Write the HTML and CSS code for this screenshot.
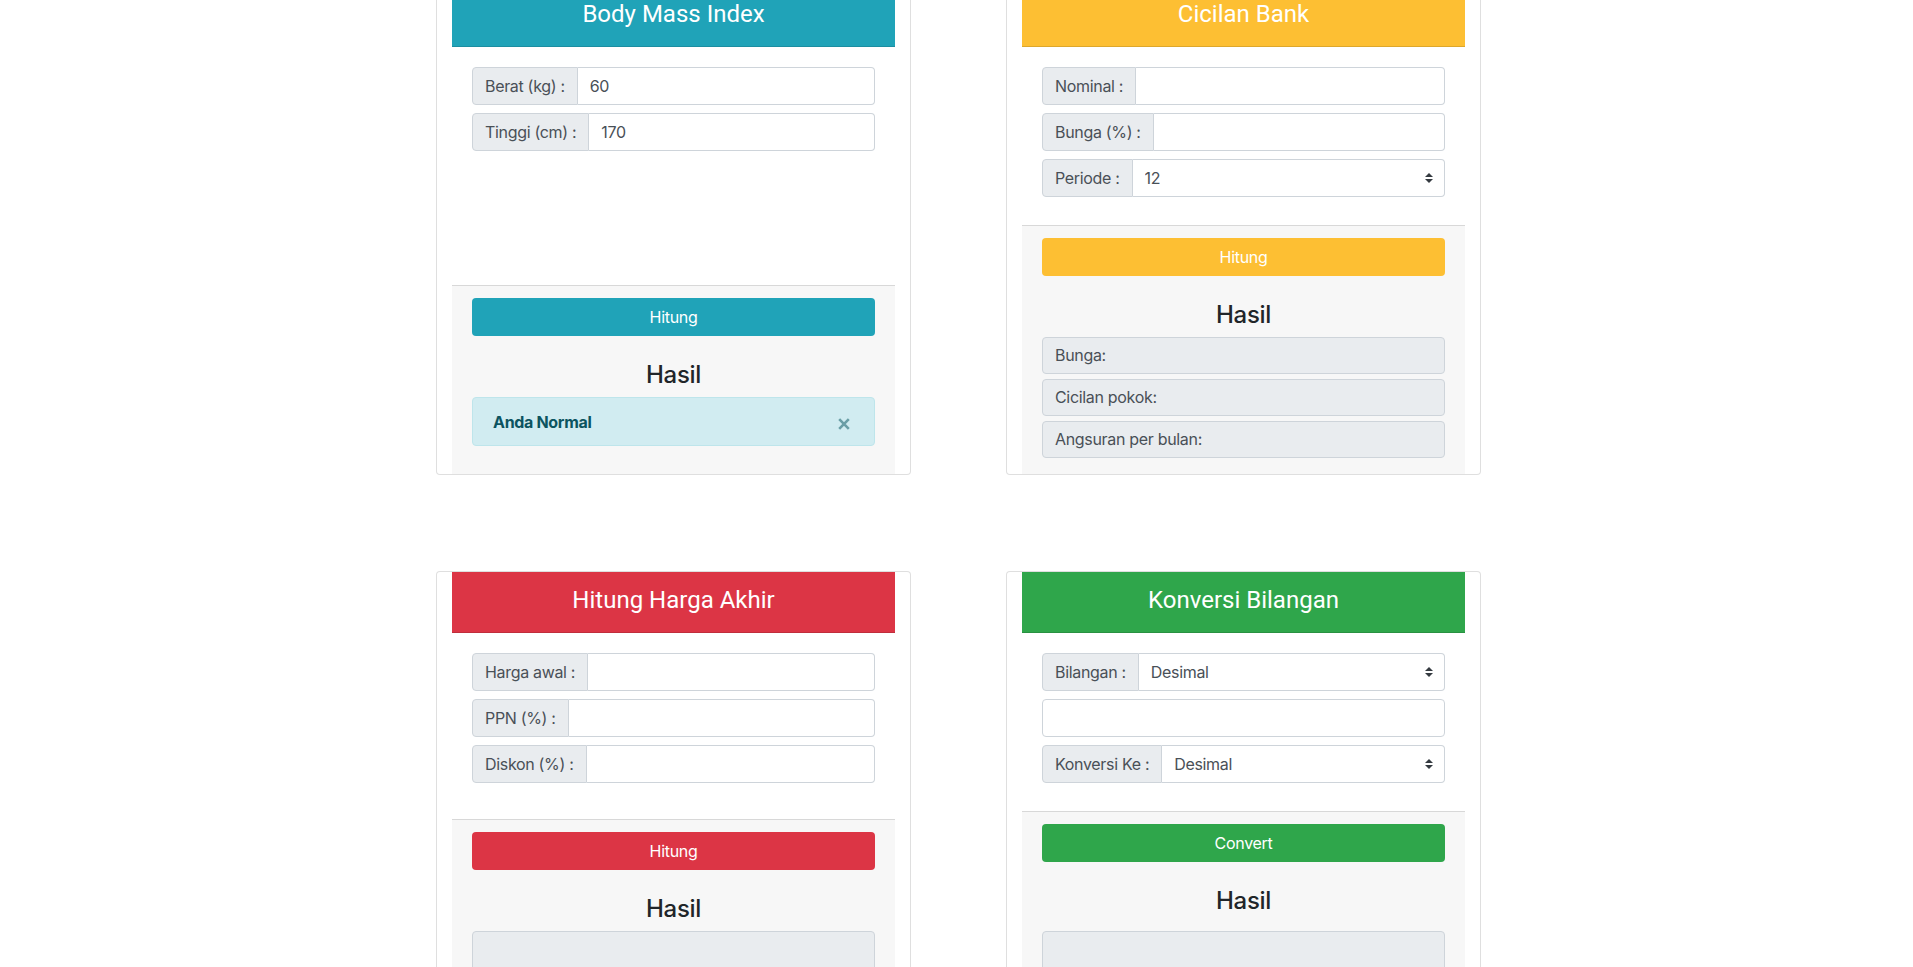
FILE: index.html
```html
<!DOCTYPE html>
<html lang="id">
<head>
<meta charset="utf-8">
<title>Kalkulator</title>
<link rel="stylesheet" href="styles.css">
</head>
<body>
<div class="page">
  <div class="grid">
    <!-- BMI -->
    <div class="card">
      <div class="card-header info"><h3 class="card-title">Body Mass Index</h3></div>
      <div class="card-body">
        <div class="input-group"><span class="addon">Berat (kg) :</span><input class="control" type="text" value="60"></div>
        <div class="input-group"><span class="addon">Tinggi (cm) :</span><input class="control" type="text" value="170"></div>
      </div>
      <div class="card-footer">
        <button class="btn info">Hitung</button>
        <h4 class="hasil">Hasil</h4>
        <div class="alert">
          <strong>Anda Normal</strong>
          <span class="close"><svg width="12" height="12" viewBox="0 0 12 12"><path d="M1.2 1.2L10.8 10.8M10.8 1.2L1.2 10.8" stroke="currentColor" stroke-width="2.6" fill="none"/></svg></span>
        </div>
      </div>
    </div>

    <!-- Cicilan -->
    <div class="card">
      <div class="card-header warning"><h3 class="card-title">Cicilan Bank</h3></div>
      <div class="card-body">
        <div class="input-group"><span class="addon">Nominal :</span><input class="control" type="text"></div>
        <div class="input-group"><span class="addon">Bunga (%) :</span><input class="control" type="text"></div>
        <div class="input-group"><span class="addon">Periode :</span>
          <div class="select-wrap"><select class="control select"><option>12</option></select><svg class="caret" width="8" height="10" viewBox="0 0 4 5"><path d="M2 0L0 2h4zm0 5L0 3h4z" fill="#343a40"/></svg></div>
        </div>
      </div>
      <div class="card-footer">
        <button class="btn warning">Hitung</button>
        <h4 class="hasil">Hasil</h4>
        <div class="result">Bunga:</div>
        <div class="result">Cicilan pokok:</div>
        <div class="result last">Angsuran per bulan:</div>
      </div>
    </div>

    <!-- Harga Akhir -->
    <div class="card">
      <div class="card-header danger"><h3 class="card-title">Hitung Harga Akhir</h3></div>
      <div class="card-body">
        <div class="input-group"><span class="addon">Harga awal :</span><input class="control" type="text"></div>
        <div class="input-group"><span class="addon">PPN (%) :</span><input class="control" type="text"></div>
        <div class="input-group"><span class="addon">Diskon (%) :</span><input class="control" type="text"></div>
      </div>
      <div class="card-footer">
        <button class="btn danger">Hitung</button>
        <h4 class="hasil">Hasil</h4>
        <div class="result tall"></div>
      </div>
    </div>

    <!-- Konversi -->
    <div class="card">
      <div class="card-header success"><h3 class="card-title">Konversi Bilangan</h3></div>
      <div class="card-body">
        <div class="input-group"><span class="addon">Bilangan :</span>
          <div class="select-wrap"><select class="control select"><option>Desimal</option></select><svg class="caret" width="8" height="10" viewBox="0 0 4 5"><path d="M2 0L0 2h4zm0 5L0 3h4z" fill="#343a40"/></svg></div>
        </div>
        <div class="input-group"><input class="control full" type="text"></div>
        <div class="input-group"><span class="addon">Konversi Ke :</span>
          <div class="select-wrap"><select class="control select"><option>Desimal</option></select><svg class="caret" width="8" height="10" viewBox="0 0 4 5"><path d="M2 0L0 2h4zm0 5L0 3h4z" fill="#343a40"/></svg></div>
        </div>
      </div>
      <div class="card-footer">
        <button class="btn success">Convert</button>
        <h4 class="hasil wide">Hasil</h4>
        <div class="result tall"></div>
      </div>
    </div>
  </div>
</div>
</body>
</html>
```

FILE: styles.css
```css
* { box-sizing: border-box; }

body {
  margin: 0;
  font-family: Inter, "Noto Sans", sans-serif;
  font-size: 16px;
  line-height: 1.5;
  color: #212529;
  background: #fff;
  letter-spacing: -0.02em;
}

.page {
  display: flex;
  justify-content: center;
  padding-left: 4px;
  margin-top: -15px;
}

.grid {
  display: grid;
  grid-template-columns: 475px 475px;
  column-gap: 95px;
  row-gap: 96px;
}

.card {
  display: flex;
  flex-direction: column;
  border: 1px solid rgba(0, 0, 0, 0.125);
  border-radius: 4px;
  padding: 0 15px;
  background: #fff;
}

.card-header {
  padding: 12px 20px 10px;
  border-bottom: 1px solid rgba(0, 0, 0, 0.125);
  color: #fff;
  text-align: center;
}

.card-title {
  margin: 0 0 6px;
  font-family: Roboto, Inter, sans-serif;
  font-size: 24px;
  line-height: 32px;
  font-weight: 400;
  letter-spacing: 0;
}

.info { background: #20a3b8; }
.warning { background: #fdbf33; }
.danger { background: #dc3545; }
.success { background: #2fa64b; }

.card-body {
  flex: 1 0 auto;
  padding: 20px;
}

.input-group {
  display: flex;
  height: 38px;
  margin-bottom: 8px;
}

.addon {
  display: flex;
  align-items: center;
  padding: 0 12px;
  background: #e9ecef;
  border: 1px solid #ced4da;
  border-radius: 4px 0 0 4px;
  color: #495057;
  white-space: nowrap;
}

.control {
  flex: 1;
  min-width: 0;
  height: 38px;
  border: 1px solid #ced4da;
  border-left: 0;
  border-radius: 0 4px 4px 0;
  padding: 0 12px;
  font: inherit;
  letter-spacing: inherit;
  color: #495057;
  background: #fff;
  outline: none;
}

.control.full {
  border-left: 1px solid #ced4da;
  border-radius: 4px;
}

.select-wrap {
  position: relative;
  flex: 1;
  display: flex;
}

.select {
  -webkit-appearance: none;
  appearance: none;
  width: 100%;
}

.caret {
  position: absolute;
  right: 12px;
  top: 14px;
  pointer-events: none;
}

.card-footer {
  border-top: 1px solid rgba(0, 0, 0, 0.125);
  background: #f7f7f7;
  padding: 12px 20px;
}

.btn {
  display: block;
  width: 100%;
  height: 38px;
  border: 1px solid transparent;
  border-radius: 4px;
  font: inherit;
  letter-spacing: inherit;
  color: #fff;
  padding: 0 12px;
}

.hasil {
  margin: 25px 0 7px;
  font-size: 24px;
  line-height: 1.2;
  font-weight: 500;
  text-align: center;
}

.hasil.wide { margin-bottom: 15px; }

.alert {
  position: relative;
  margin-bottom: 16px;
  padding: 12px 20px;
  border: 1px solid #bee5eb;
  border-radius: 4px;
  background: #d1ecf1;
  color: #0c5460;
  height: 49px;
}

.alert strong { font-weight: 700; }

.close {
  position: absolute;
  right: 24px;
  top: 20px;
  width: 12px;
  height: 12px;
  display: flex;
  color: #6a9ea6;
}

.result {
  display: flex;
  align-items: center;
  height: 37px;
  margin-bottom: 5px;
  padding: 0 12px;
  background: #e9ecef;
  border: 1px solid #ced4da;
  border-radius: 4px;
  color: #495057;
}

.result.last { margin-bottom: 4px; }
.result.tall { height: 60px; }
```
